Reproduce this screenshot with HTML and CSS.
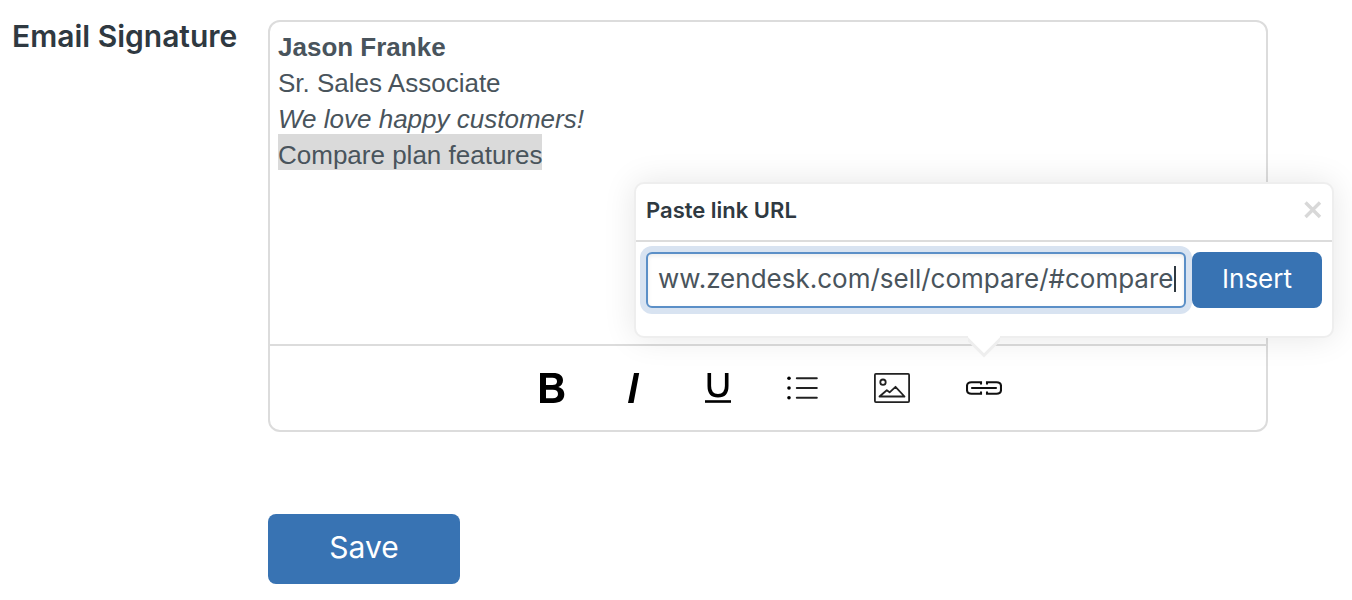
FILE: index.html
```html
<!DOCTYPE html>
<html lang="en">
<head>
<meta charset="utf-8">
<title>Email Signature</title>
<link rel="stylesheet" href="styles.css">
</head>
<body>
<form class="settings">
  <h2 class="settings-label" id="signature-label">Email Signature</h2>
  <div class="settings-field">
    <section class="editor" aria-labelledby="signature-label">
      <div class="editor-content">
        <p class="line"><strong>Jason Franke</strong></p>
        <p class="line">Sr. Sales Associate</p>
        <p class="line"><em>We love happy customers!</em></p>
        <p class="line"><span class="selection">Compare plan features</span></p>
      </div>
      <div class="toolbar" role="toolbar" aria-label="Formatting">
        <button class="tool" type="button" aria-label="Bold">
          <svg width="31" height="36" viewBox="-1 0 31 36"><path fill-rule="evenodd" d="M5 3H18C24.500 3 28 5.700 28 10.300C28 13.700 26.200 16 23.300 17C27 17.800 29.300 20.700 29.300 24.300C29.300 29.800 25.300 33 18.500 33H5ZM11 7.800V15H17.300C20.500 15 22 13.700 22 11.400C22 9 20.500 7.800 17.300 7.800ZM11 19.800V28.200H17.800C21.300 28.200 23 26.700 23 24C23 21.200 21.300 19.800 17.800 19.800Z"/></svg>
        </button>
        <button class="tool" type="button" aria-label="Italic">
          <svg width="28" height="36" viewBox="5 0 28 36"><path d="M18 3H23.200L17.600 33H12Z"/></svg>
        </button>
        <button class="tool" type="button" aria-label="Underline">
          <svg width="26" height="36" viewBox="5 0 26 36" fill="none" stroke="#000"><path d="M9.300 3V16C9.300 22.500 12.300 25.700 18 25.700S26.700 22.500 26.700 16V3" stroke-width="3.600"/><path d="M5 31.500H31" stroke-width="2.600"/></svg>
        </button>
        <button class="tool" type="button" aria-label="Bulleted list">
          <svg width="31" height="36" viewBox="3 0 31 36"><path d="M12.800 8.200H32.800M12.800 18H32.800M12.800 27.800H32.800" stroke="#222" stroke-width="2" stroke-linecap="round"/><g><circle cx="5" cy="8.200" r="1.800"/><circle cx="5" cy="18" r="1.800"/><circle cx="5" cy="27.800" r="1.800"/></g></svg>
        </button>
        <button class="tool" type="button" aria-label="Image">
          <svg width="36" height="36" viewBox="0 0 36 36" fill="none" stroke="#222" stroke-width="1.800"><rect x=".9" y="3.900" width="34.200" height="28.200" rx="1"/><circle cx="9" cy="12.200" r="2.700"/><path d="M5.500 26.500L12.800 20.300L15.600 22.300L21.500 16.800L30.500 26.500Z" stroke-linejoin="round"/></svg>
        </button>
        <button class="tool" type="button" aria-label="Link">
          <svg width="36" height="36" viewBox="0 0 36 36" fill="none" stroke="#111" stroke-width="2.100"><path d="M15 14.500V12.300H5.500Q1 12.300 1 16V20Q1 23.700 5.500 23.700H15V21.500M21 14.500V12.300H30.500Q35 12.300 35 16V20Q35 23.700 30.500 23.700H21V21.500"/><path d="M6 18H30" stroke-linecap="round"/></svg>
        </button>
      </div>
      <div class="popover" role="dialog" aria-labelledby="link-title">
        <div class="popover-head">
          <label class="popover-title" id="link-title" for="link-url">Paste link URL</label>
          <button class="close" type="button" aria-label="Close">
            <svg width="18" height="18" viewBox="0 0 18 18" stroke="#d8d8d8" stroke-width="3.400"><path d="M1.500 1.500L16 16M16 1.500L1.500 16"/></svg>
          </button>
        </div>
        <div class="popover-body">
          <span class="url-field">
            <input class="url" id="link-url" type="text" value="ww.zendesk.com/sell/compare/#compare">
            <span class="caret"></span>
          </span>
          <button class="button insert" type="button">Insert</button>
        </div>
        <svg class="arrow" width="32" height="22" viewBox="2 0 32 22"><path d="M0 0H36V1L18 19L0 1Z" fill="#fff"/><path d="M0 1.400L18 19.400L36 1.400" fill="none" stroke="#eee" stroke-width="3"/></svg>
      </div>
    </section>
    <button class="button save" type="button">Save</button>
  </div>
</form>
</body>
</html>
```
FILE: styles.css
```css
* { box-sizing: border-box; }

body {
  margin: 0;
  background: #fff;
  color: #2f3941;
  font-family: Inter, "Liberation Sans", sans-serif;
}

button, input { font-family: inherit; }

.settings {
  display: grid;
  grid-template-columns: 256px 1fr;
  padding: 20px 84px 16px 12px;
}

.settings-label {
  margin: 0;
  font-size: 30px;
  font-weight: 600;
  line-height: 32px;
  white-space: nowrap;
}

.editor {
  position: relative;
  border: 2px solid #dcdcdc;
  border-radius: 12px;
}

.editor-content {
  min-height: 322px;
  padding: 7px 8px;
  color: #49545c;
  font-family: "Liberation Sans", Arial, sans-serif;
  font-size: 26px;
  line-height: 36px;
}

.line { margin: 0; }

.selection {
  padding-top: 6px;
  background: #dadada;
}

.toolbar {
  display: flex;
  justify-content: center;
  gap: 56px;
  padding: 24px 0;
  border-top: 2px solid #dcdcdc;
}

.tool {
  display: flex;
  padding: 0;
  border: 0;
  background: none;
}

.popover {
  position: absolute;
  top: 160px;
  right: -68px;
  width: 700px;
  border: 2px solid #eee;
  border-radius: 10px;
  background: #fff;
  box-shadow: 0 0 32px rgba(0, 0, 0, 0.1);
}

.popover-head {
  display: flex;
  align-items: center;
  justify-content: space-between;
  height: 58px;
  padding: 0 10px 4px;
  border-bottom: 2px solid #dcdcdc;
}

.popover-title {
  font-size: 22px;
  font-weight: 600;
}

.close {
  display: flex;
  padding: 0;
  border: 0;
  background: none;
}

.popover-body {
  display: flex;
  gap: 6px;
  padding: 10px 10px 28px;
}

.url-field {
  position: relative;
  flex: 1;
}

.url {
  display: block;
  width: 100%;
  height: 56px;
  padding: 0 8px 4px 10px;
  border: 2px solid #5b8fc7;
  border-radius: 6px;
  outline: 0;
  background: #fff;
  box-shadow: 0 0 0 6px #d8e3f1, inset 0 2px 4px rgba(0, 0, 0, 0.08);
  color: #49545c;
  font-size: 26px;
}

.caret {
  position: absolute;
  top: 14px;
  right: 10px;
  width: 2px;
  height: 26px;
  background: #2f3941;
}

.button {
  border: 0;
  border-radius: 8px;
  background: #3873b3;
  color: #fff;
}

.insert {
  width: 130px;
  height: 56px;
  padding: 0 0 4px;
  font-size: 26px;
}

.save {
  width: 192px;
  height: 70px;
  margin-top: 82px;
  padding: 0 0 4px;
  font-size: 30px;
}

.arrow {
  position: absolute;
  top: 100%;
  right: 332px;
}
```
